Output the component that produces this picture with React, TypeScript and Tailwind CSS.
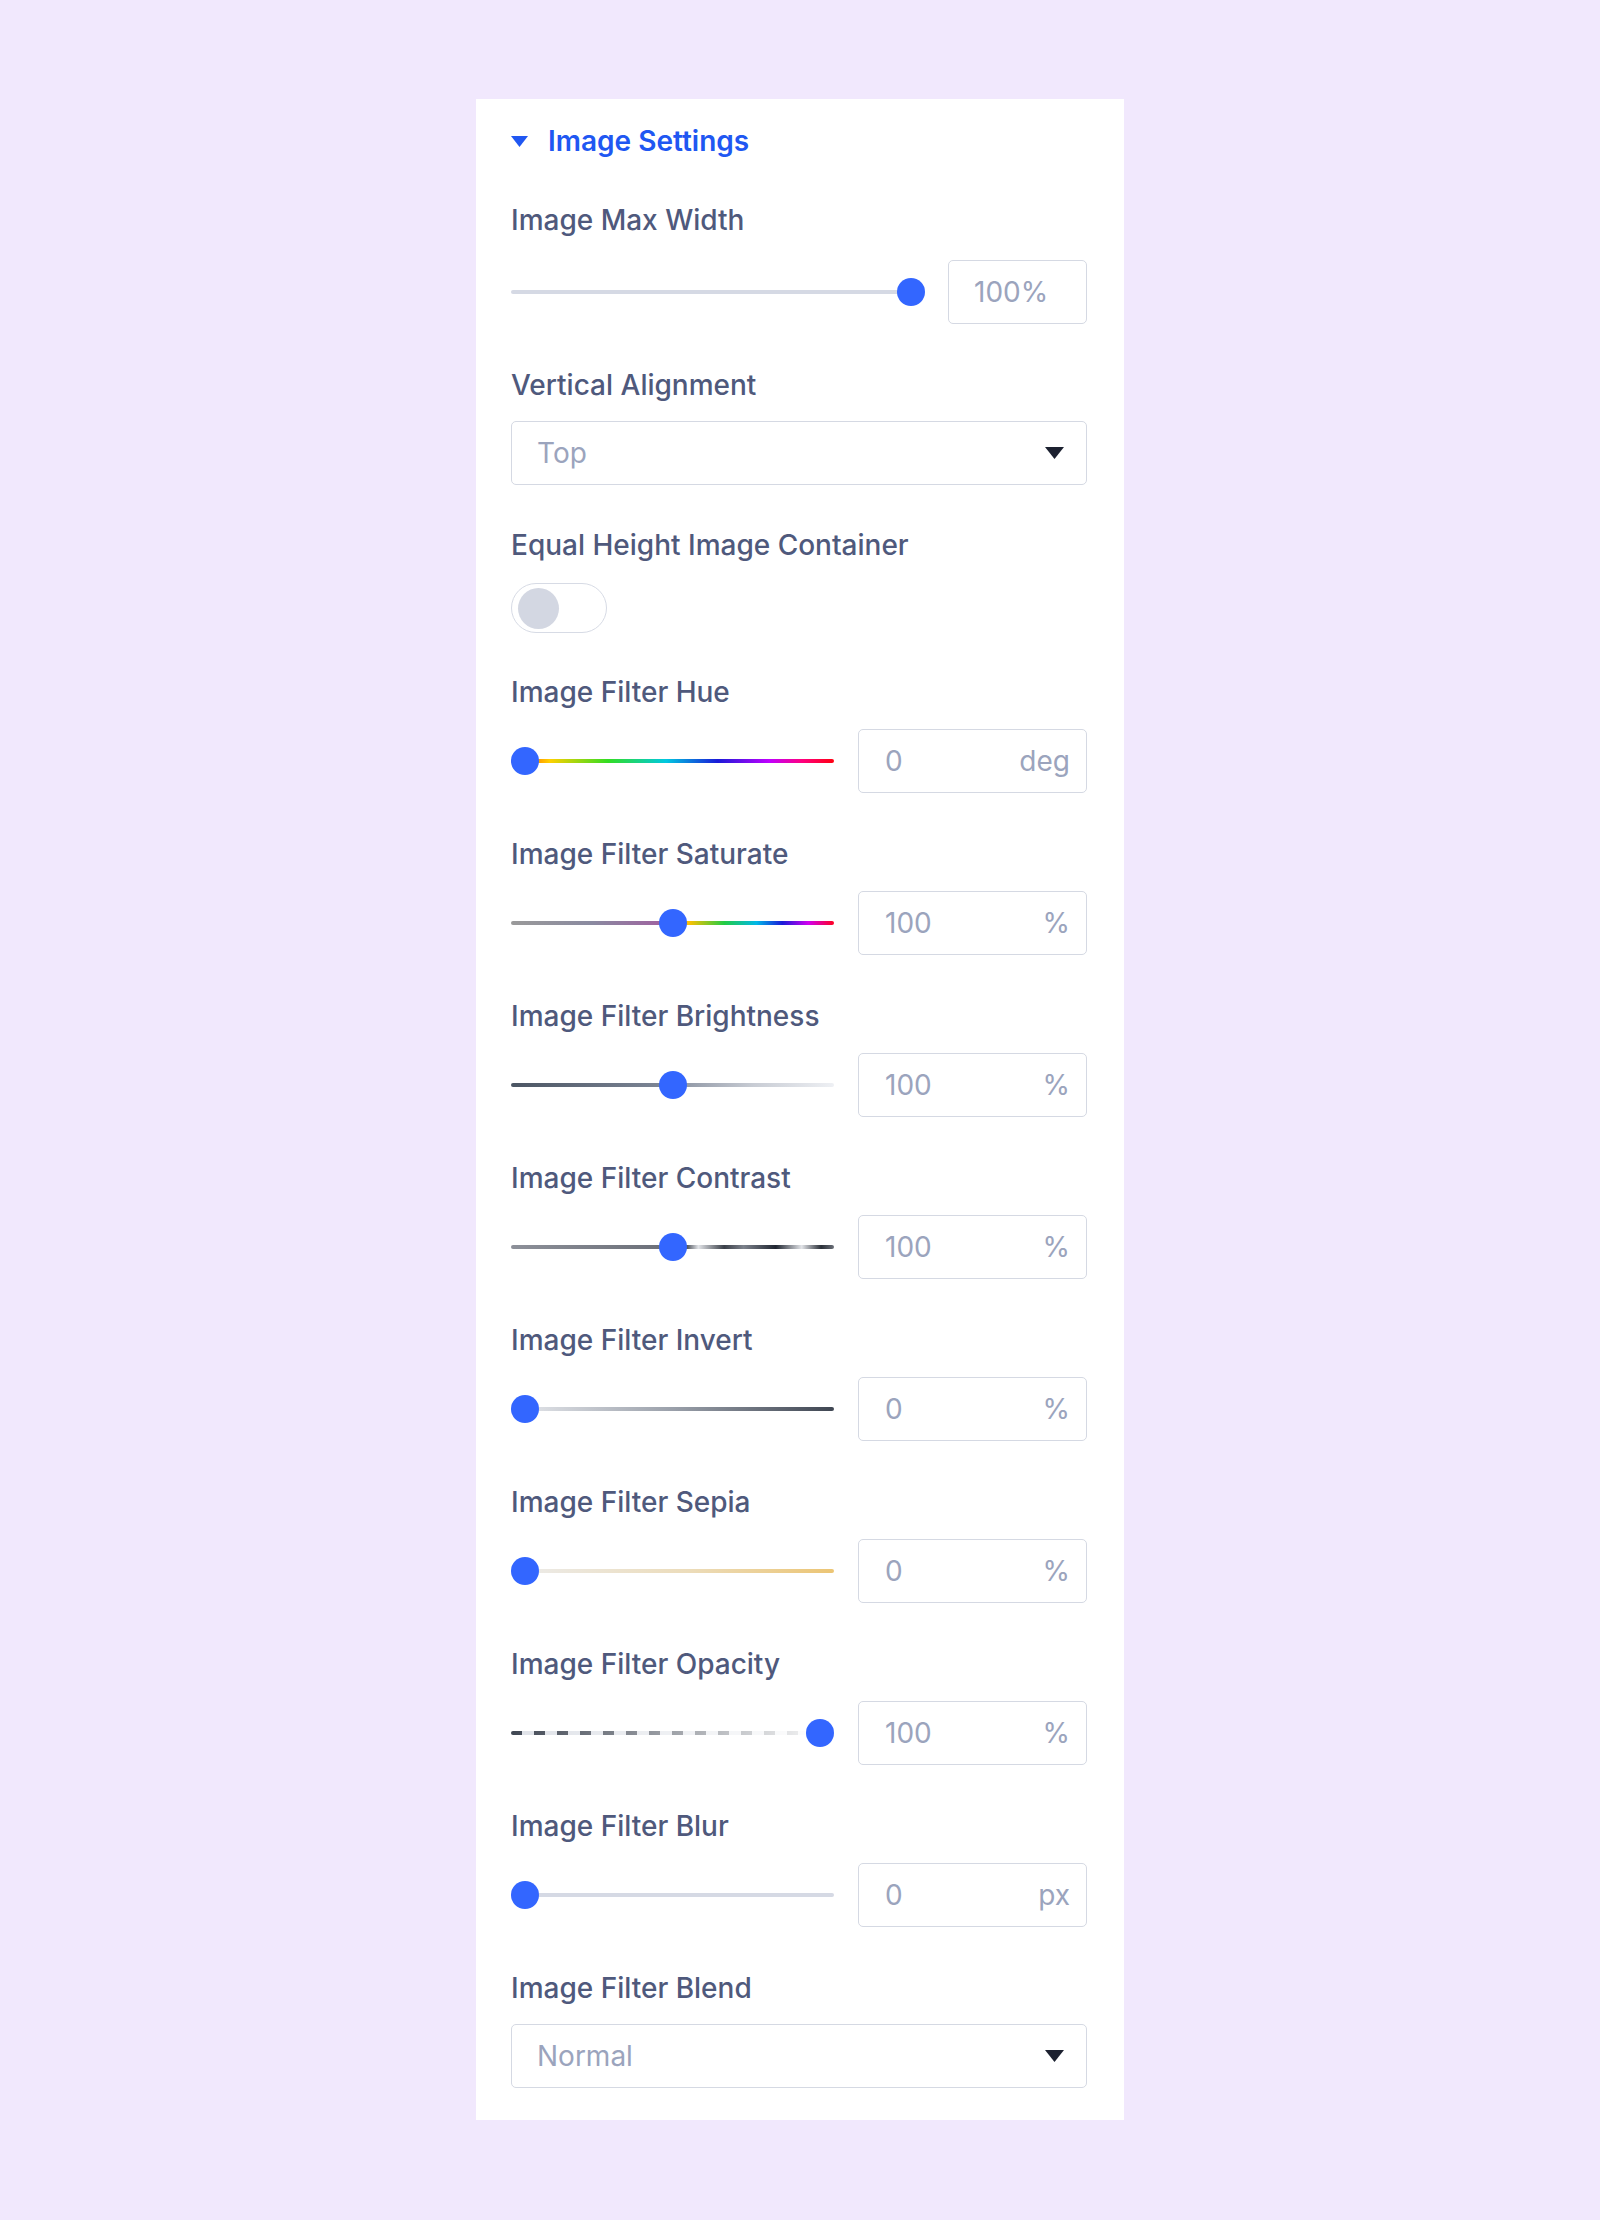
import React from 'react';

type Track = 'plain' | 'hue' | 'saturate' | 'brightness' | 'contrast' | 'invert' | 'sepia' | 'opacity';

const trackStyles: Record<Track, React.CSSProperties> = {
  plain: { background: '#d5d9e4' },
  hue: {
    background:
      'linear-gradient(to right, #ff2a00, #ffd000 12%, #33dd22 30%, #00c8e0 48%, #1a1ad8 64%, #c000ff 80%, #ff0080 90%, #ff0010)',
  },
  saturate: {
    background:
      'linear-gradient(to right, #9a9a9a, #8a8aa0 25%, #a060a0 48%, #ffc000 55%, #22cc44 66%, #00b8e8 76%, #1a1ad8 84%, #d000f0 92%, #ff0020)',
  },
  brightness: { background: 'linear-gradient(to right, #4b5563, #7b8494 45%, #c8ccd4 75%, #eef0f4)' },
  contrast: {
    background:
      'linear-gradient(to right, #8d9099, #6b6f78 48%, #3a3f48 54%, #e2e4e8 58%, #3a3f48 66%, #7d828c 72%, #1f2530 82%, #e2e4e8 90%, #2a2f38 96%, #6b6f78)',
  },
  invert: { background: 'linear-gradient(to right, #e8eaee, #9aa0aa 50%, #3f4652)' },
  sepia: { background: 'linear-gradient(to right, #ececec, #ecdcba 55%, #ecc574)' },
  opacity: {
    background:
      'linear-gradient(to right, rgba(255,255,255,0), rgba(255,255,255,0.95) 95%), repeating-linear-gradient(to right, #3f4652 0 11px, #dfe2e8 11px 23px)',
  },
};

function Slider({ track, pos }: { track: Track; pos: number }) {
  return (
    <div className="relative flex-1 h-7 flex items-center">
      <div className="h-[4px] w-full rounded-full" style={trackStyles[track]} />
      <div
        className="absolute top-0 w-7 h-7 rounded-full bg-[#3366ff]"
        style={{ left: `calc(${pos}% - ${(pos / 100) * 28}px)` }}
      />
    </div>
  );
}

function Label({ children, mb = 'mb-[22px]' }: { children: React.ReactNode; mb?: string }) {
  return <div className={`h-[30px] leading-[30px] text-[28px] font-medium text-[#4f597c] ${mb}`}>{children}</div>;
}

function NumberBox({ value, unit }: { value: string; unit: string }) {
  return (
    <div className="w-[229px] h-16 border-[1.5px] border-[#d5d9e3] rounded-[5px] flex items-center justify-between pl-[26px] pr-[16px] text-[28px] text-[#9ba4bd]">
      <span>{value}</span>
      <span>{unit}</span>
    </div>
  );
}

function SliderField({ label, track, pos, value, unit }: { label: string; track: Track; pos: number; value: string; unit: string }) {
  return (
    <div>
      <Label>{label}</Label>
      <div className="flex items-center gap-6">
        <Slider track={track} pos={pos} />
        <NumberBox value={value} unit={unit} />
      </div>
    </div>
  );
}

function SelectField({ label, value }: { label: string; value: string }) {
  return (
    <div>
      <Label mb="mb-[21px]">{label}</Label>
      <div className="h-16 border-[1.5px] border-[#d5d9e3] rounded-[5px] flex items-center justify-between pl-[25px] pr-[22px] text-[28px] text-[#9ba4bd]">
        <span>{value}</span>
        <svg width="19" height="12" viewBox="0 0 19 12">
          <path d="M0 0 H19 L9.5 12 Z" fill="#1c2130" />
        </svg>
      </div>
    </div>
  );
}

export default function App() {
  return (
    <div className="min-h-[2220px] bg-[#f1e8fd] pt-[99px] pb-[100px]" style={{ fontFamily: 'Inter, "Noto Sans", sans-serif' }}>
      <div className="mx-auto w-[648px] bg-white pl-[35px] pr-[37px] pt-[27px] pb-[32px] flex flex-col gap-[46px]">
        <div className="h-[30px] flex items-center gap-[20px] text-[28px] font-semibold text-[#2057f2]">
          <svg width="17" height="11" viewBox="0 0 17 11">
            <path d="M0 0 H17 L8.5 11 Z" fill="#2057f2" />
          </svg>
          <span>Image Settings</span>
        </div>

        <div className="mt-[3px]">
          <Label mb="mb-[25px]">Image Max Width</Label>
          <div className="flex items-center gap-[23px]">
            <Slider track="plain" pos={100} />
            <div className="w-[139px] h-16 border-[1.5px] border-[#d5d9e3] rounded-[5px] flex items-center pl-[25px] text-[28px] text-[#9ba4bd]">
              100%
            </div>
          </div>
        </div>

        <SelectField label="Vertical Alignment" value="Top" />

        <div className="-mt-px">
          <Label mb="mb-[23px]">Equal Height Image Container</Label>
          <div className="w-[96px] h-[50px] rounded-full border-[1.5px] border-[#d7dbe5] flex items-center pl-[6px]">
            <div className="w-[41px] h-[41px] rounded-full bg-[#d3d7e2]" />
          </div>
        </div>

        <div className="-mt-[2px]">
          <SliderField label="Image Filter Hue" track="hue" pos={0} value="0" unit="deg" />
        </div>
        <SliderField label="Image Filter Saturate" track="saturate" pos={50} value="100" unit="%" />
        <SliderField label="Image Filter Brightness" track="brightness" pos={50} value="100" unit="%" />
        <SliderField label="Image Filter Contrast" track="contrast" pos={50} value="100" unit="%" />
        <SliderField label="Image Filter Invert" track="invert" pos={0} value="0" unit="%" />
        <SliderField label="Image Filter Sepia" track="sepia" pos={0} value="0" unit="%" />
        <SliderField label="Image Filter Opacity" track="opacity" pos={100} value="100" unit="%" />
        <SliderField label="Image Filter Blur" track="plain" pos={0} value="0" unit="px" />

        <SelectField label="Image Filter Blend" value="Normal" />
      </div>
    </div>
  );
}
